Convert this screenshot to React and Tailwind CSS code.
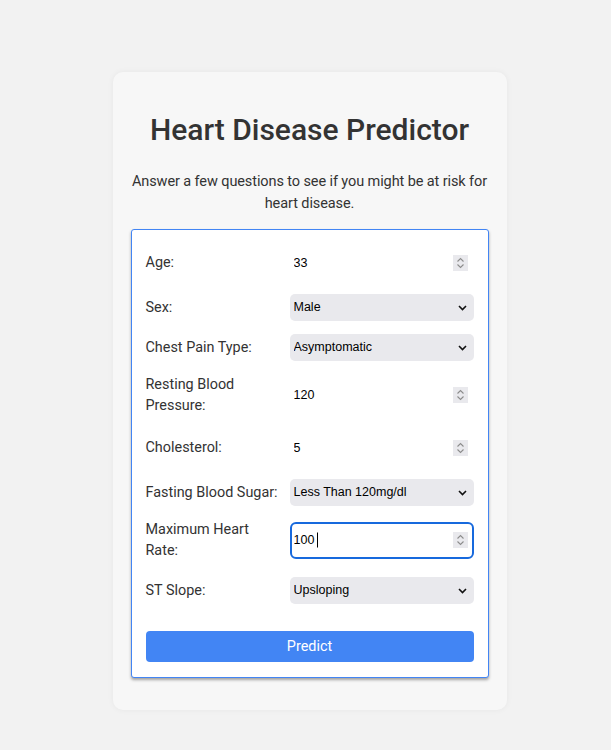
import React, { useState } from 'react';

const fields = [
    { label: 'Age:', type: 'number', value: '33' },
    { label: 'Sex:', type: 'select', value: 'Male', options: ['Male', 'Female'] },
    { label: 'Chest Pain Type:', type: 'select', value: 'Asymptomatic', options: ['Typical Angina', 'Atypical Angina', 'Non-Anginal Pain', 'Asymptomatic'] },
    { label: 'Resting Blood Pressure:', type: 'number', value: '120' },
    { label: 'Cholesterol:', type: 'number', value: '5' },
    { label: 'Fasting Blood Sugar:', type: 'select', value: 'Less Than 120mg/dl', options: ['Less Than 120mg/dl', 'Greater Than 120mg/dl'] },
    { label: 'Maximum Heart Rate:', type: 'number', value: '100', focused: true },
    { label: 'ST Slope:', type: 'select', value: 'Upsloping', options: ['Upsloping', 'Flat', 'Downsloping'], last: true },
];

const Spinner = () => (
    <div className="absolute right-[6px] top-1/2 -translate-y-1/2 w-[15px] h-[16px] bg-[#e9e9ed] flex items-center justify-center pointer-events-none">
        <svg width="9" height="12" viewBox="0 0 9 12" fill="none" stroke="#8c8c8c" strokeWidth="1.1">
            <path d="M1.5 4.5 L4.5 1.5 L7.5 4.5" />
            <path d="M1.5 7.5 L4.5 10.5 L7.5 7.5" />
        </svg>
    </div>
);

const Chevron = () => (
    <svg className="absolute right-[7px] top-1/2 -translate-y-1/2 pointer-events-none" width="9" height="6" viewBox="0 0 9 6" fill="none" stroke="#111" strokeWidth="1.6">
        <path d="M1 1 L4.5 4.5 L8 1" />
    </svg>
);

const Field = ({ field, value, onChange }) => {
    const control = "w-full font-['Liberation_Sans',Arial,sans-serif] text-[12.5px] text-black outline-none";
    return (
        <div className={`grid grid-cols-[144px_184px] items-center ${field.last ? 'mt-[3px]' : ''}`}>
            <label className="text-[14.4px] leading-[21px] text-[#333] pr-[6px]">{field.label}</label>
            <div className="relative">
                {field.type === 'number' ? (
                    <>
                        <input
                            type="number"
                            value={value}
                            onChange={e => onChange(e.target.value)}
                            className={`${control} h-[37px] pl-[2px] pr-6 rounded-[6px] border-2 bg-white [appearance:textfield] [&::-webkit-inner-spin-button]:appearance-none ${field.focused ? 'border-[#1769dd]' : 'border-transparent'}`}
                        />
                        {field.focused && <span className="absolute left-[27px] top-1/2 -translate-y-1/2 w-px h-[15px] bg-black" />}
                        <Spinner />
                    </>
                ) : (
                    <>
                        <select
                            value={value}
                            onChange={e => onChange(e.target.value)}
                            className={`${control} h-[27px] pl-[4px] rounded-[5px] bg-[#e9e9ed] appearance-none`}
                        >
                            {field.options.map(o => <option key={o}>{o}</option>)}
                        </select>
                        <Chevron />
                    </>
                )}
            </div>
        </div>
    );
};

const App = () => {
    const [values, setValues] = useState(fields.map(f => f.value));

    return (
        <div className="min-h-screen bg-[#f2f2f2] pt-[72px] pl-[8px] flex justify-center font-['Roboto',sans-serif]">
            <div className="w-[394px] h-fit bg-[#f7f7f7] rounded-[10px] shadow-[0_0_6px_rgba(0,0,0,0.05)] px-[18px] pt-[40px] pb-[32px]">
                <h1 className="text-[30px] leading-[36px] font-medium text-[#333] text-center">Heart Disease Predictor</h1>
                <p className="mt-[23px] -mx-[2px] text-[14.5px] tracking-[-0.1px] leading-[22px] text-[#333] text-center">
                    Answer a few questions to see if you might be at risk for heart disease.
                </p>

                <form
                    onSubmit={e => e.preventDefault()}
                    className="mt-[14px] bg-white border border-[#4285f4] rounded-[3px] px-[14px] pt-[14px] pb-[15px] shadow-[0_2px_3px_rgba(0,0,0,0.35)]"
                >
                    <div className="flex flex-col gap-[13px]">
                        {fields.map((f, i) => (
                            <Field
                                key={f.label}
                                field={f}
                                value={values[i]}
                                onChange={v => setValues(values.map((x, j) => (j === i ? v : x)))}
                            />
                        ))}
                    </div>
                    <button type="submit" className="mt-[27px] w-full h-[31px] bg-[#4285f4] rounded-[4px] text-white text-[14.4px]">
                        Predict
                    </button>
                </form>
            </div>
        </div>
    );
};

export default App;
